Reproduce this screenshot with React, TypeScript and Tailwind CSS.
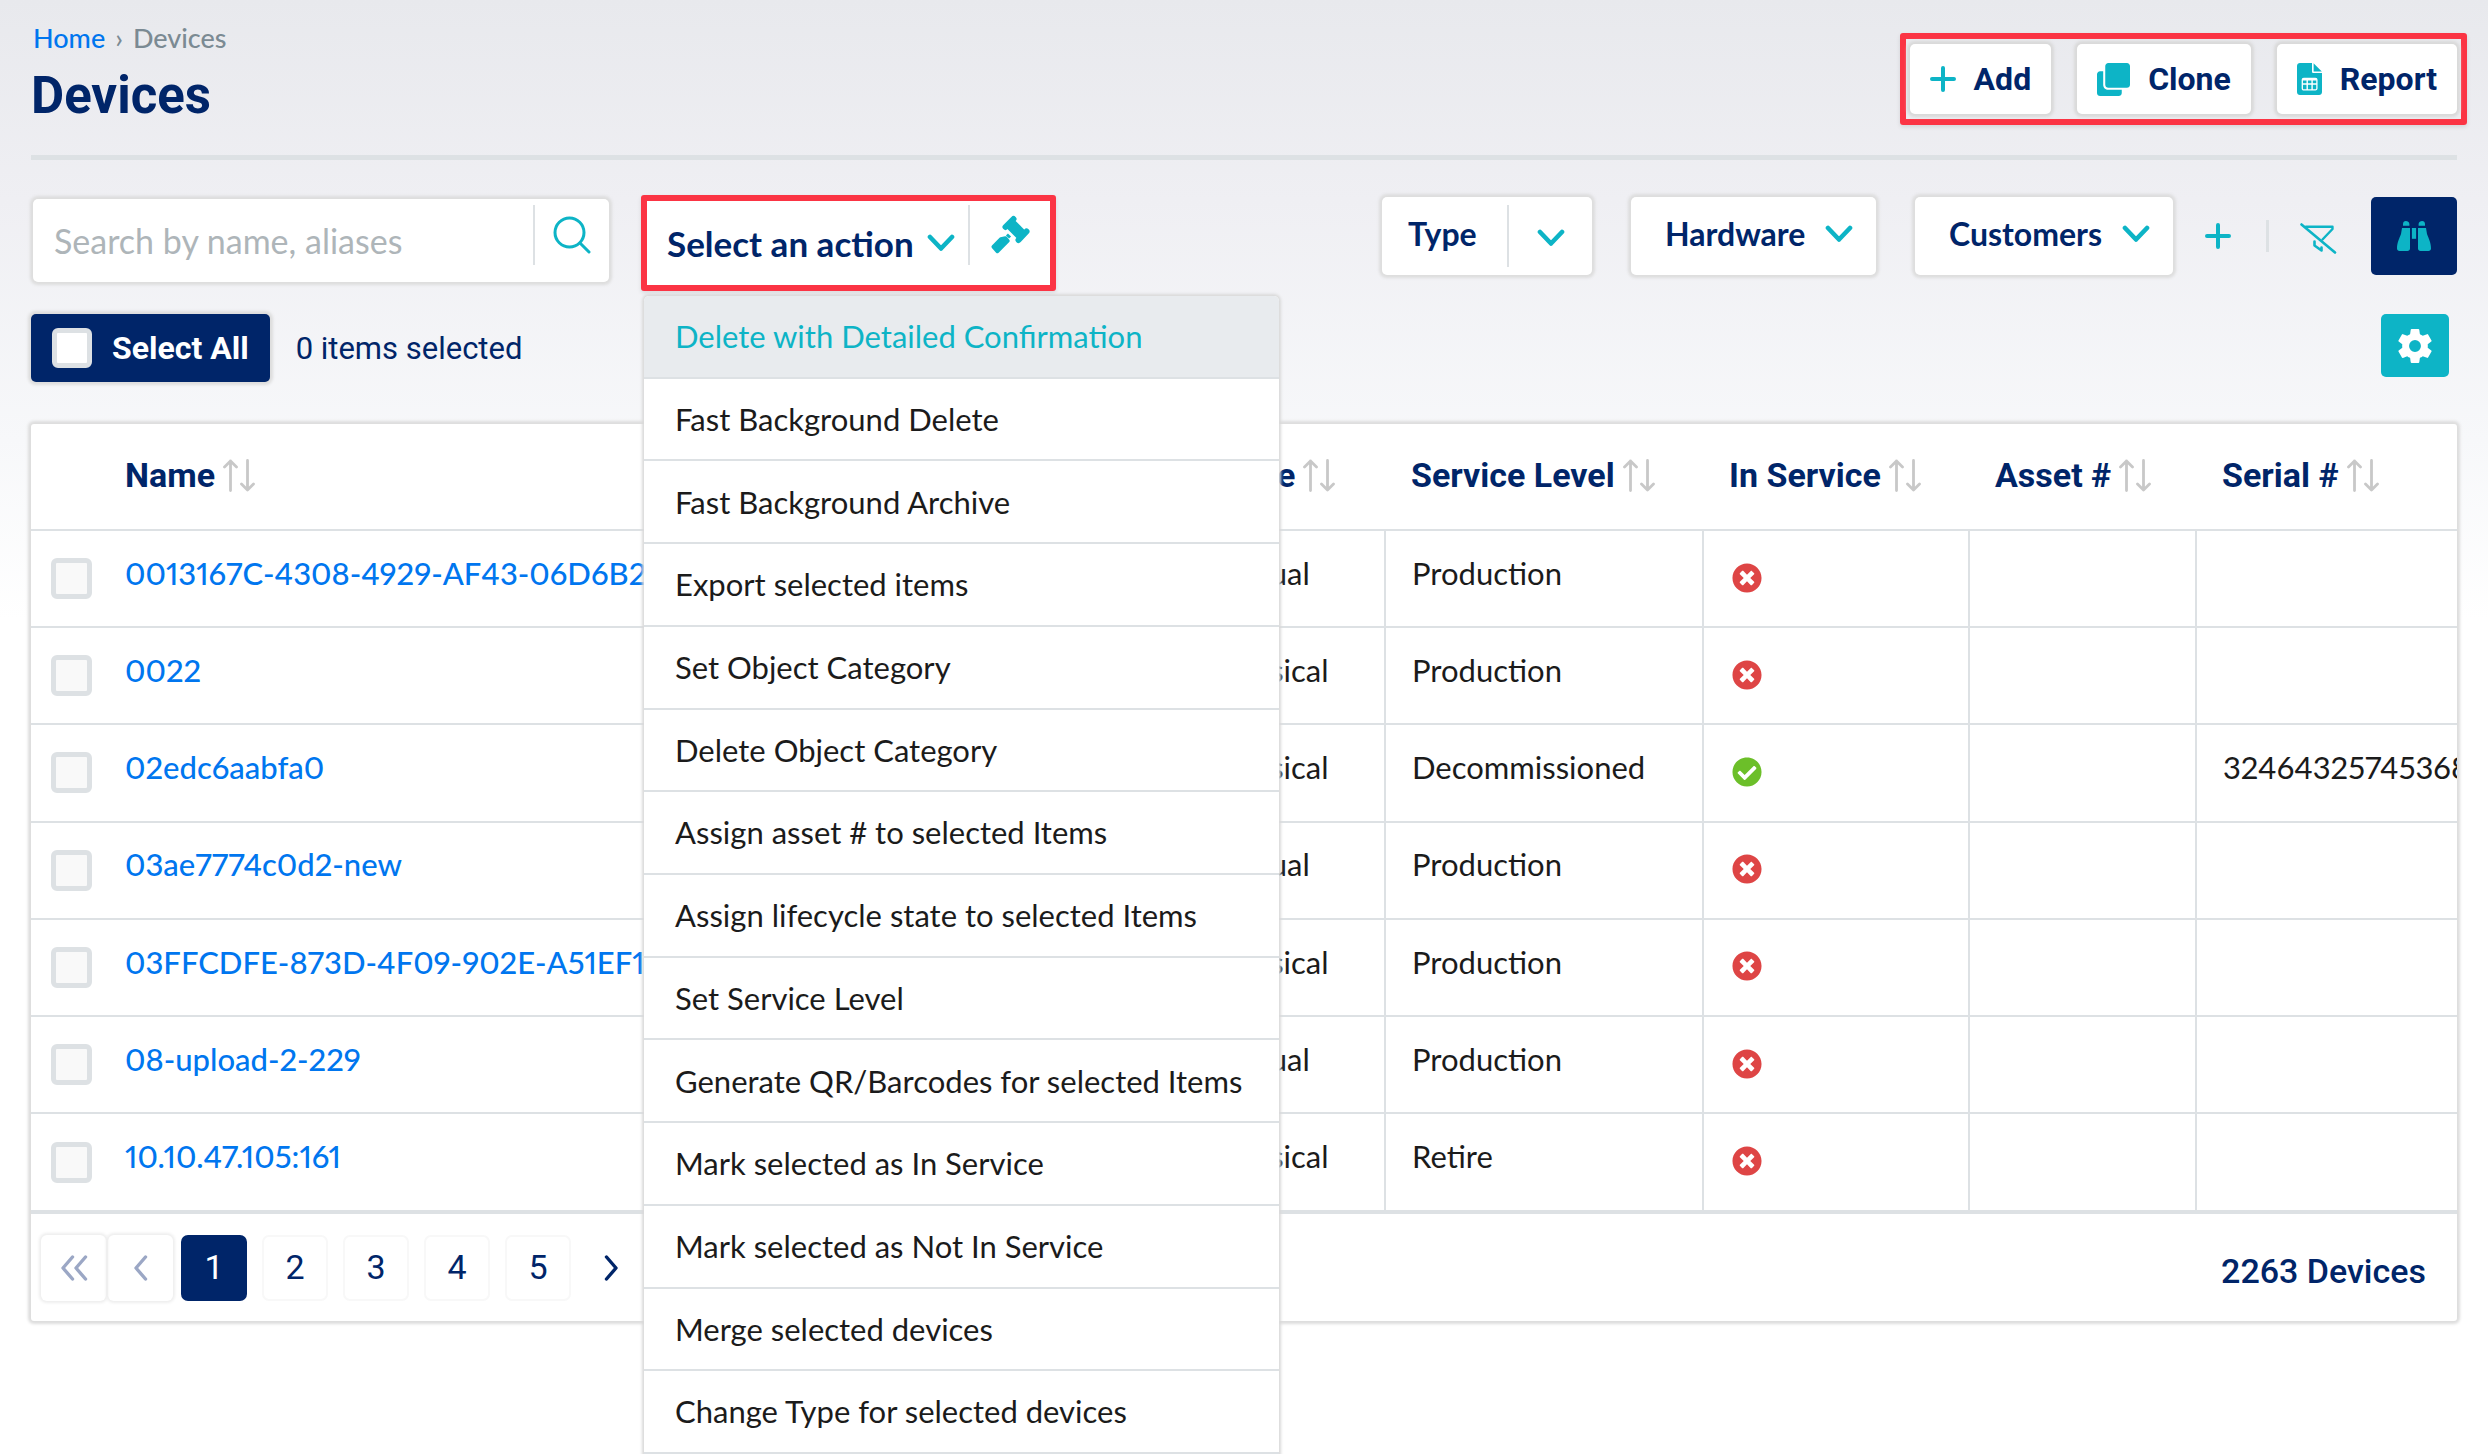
import type { ReactNode } from "react";
import { FaCheckCircle, FaClone, FaTimesCircle } from "react-icons/fa";
import { IoSettingsSharp } from "react-icons/io5";

const ACTIONS = [
  "Delete with Detailed Confirmation",
  "Fast Background Delete",
  "Fast Background Archive",
  "Export selected items",
  "Set Object Category",
  "Delete Object Category",
  "Assign asset # to selected Items",
  "Assign lifecycle state to selected Items",
  "Set Service Level",
  "Generate QR/Barcodes for selected Items",
  "Mark selected as In Service",
  "Mark selected as Not In Service",
  "Merge selected devices",
  "Change Type for selected devices",
];

type Device = {
  name: string;
  type: string;
  level: string;
  inService: boolean;
  serial?: string;
};

const DEVICES: Device[] = [
  { name: "0013167C-4308-4929-AF43-06D6B25", type: "Virtual", level: "Production", inService: false },
  { name: "0022", type: "Physical", level: "Production", inService: false },
  { name: "02edc6aabfa0", type: "Physical", level: "Decommissioned", inService: true, serial: "32464325745368" },
  { name: "03ae7774c0d2-new", type: "Virtual", level: "Production", inService: false },
  { name: "03FFCDFE-873D-4F09-902E-A51EF1C", type: "Physical", level: "Production", inService: false },
  { name: "08-upload-2-229", type: "Virtual", level: "Production", inService: false },
  { name: "10.10.47.105:161", type: "Physical", level: "Retire", inService: false },
];

const COLUMNS = ["Name", "Type", "Service Level", "In Service", "Asset #", "Serial #"];

function Chevron() {
  return (
    <svg className="h-[18px] w-7 shrink-0 text-[#0db4c6]" viewBox="0 0 28 18" fill="none" stroke="currentColor" strokeWidth="4.6" strokeLinecap="round" strokeLinejoin="round" aria-hidden="true">
      <path d="M3 3l11 11.5L25 3" />
    </svg>
  );
}

function PlusIcon() {
  return (
    <svg className="size-[26px] shrink-0 text-[#0db4c6]" viewBox="0 0 26 26" fill="none" stroke="currentColor" strokeWidth="4" strokeLinecap="round" aria-hidden="true">
      <path d="M13 2v22M2 13h22" />
    </svg>
  );
}

function ReportIcon() {
  return (
    <svg className="h-8 w-[25px] shrink-0 text-[#0db4c6]" viewBox="0 0 25 32" fill="currentColor" aria-hidden="true">
      <path d="M3 0h12v8.5c0 1 .6 1.6 1.6 1.6H25V29c0 1.7-1.3 3-3 3H3c-1.7 0-3-1.3-3-3V3c0-1.700 1.300-3 3-3z" />
      <path d="M16.600.3L24.800 8.600h-8.200z" />
      <rect x="5.300" y="15.300" width="14.600" height="11.600" rx="1.500" fill="none" stroke="#fff" strokeWidth="1.300" />
      <path d="M5.300 21h14.600M10.200 15.300v11.600M15.100 15.300v11.600M5.300 16.800h14.600" fill="none" stroke="#fff" strokeWidth="1.400" />
    </svg>
  );
}

function SearchIcon() {
  return (
    <svg className="size-[38px] text-[#0db4c6]" viewBox="0 0 38 38" fill="none" stroke="currentColor" strokeWidth="3" strokeLinecap="round" aria-hidden="true">
      <circle cx="16.500" cy="16.500" r="14.500" />
      <path d="M27 27l9 9" />
    </svg>
  );
}

function GavelIcon() {
  return (
    <svg className="size-10 text-[#0db4c6]" viewBox="0 0 40 40" fill="none" stroke="currentColor" strokeLinejoin="round" strokeLinecap="round" aria-hidden="true">
      <path d="M15.500 12L23.500 4M28.500 25L36.500 16.500" strokeWidth="6" />
      <path d="M20 8.500L32 20.500" strokeWidth="11.500" strokeLinecap="butt" />
      <path d="M19.500 20L17.500 22" strokeWidth="4.500" strokeLinecap="butt" />
      <path d="M10.800 24L3.200 31.800L7.400 36.500L18 25.800L15.500 23Z" fill="currentColor" strokeWidth="3.500" />
    </svg>
  );
}

function FilterOffIcon() {
  return (
    <svg className="h-[31px] w-[37px]" viewBox="0 0 37 31" fill="none" stroke="#0db4c6" strokeLinecap="round" strokeLinejoin="round" aria-hidden="true">
      <path d="M1.500 1.500L35 29.500" strokeWidth="2.600" />
      <path d="M6 3.800h26.500v2.200L22.500 16.500" strokeWidth="2.400" />
      <path d="M14.500 18.500v4L21.500 27.500v-3" strokeWidth="2.600" />
    </svg>
  );
}

function BinocularsIcon() {
  return (
    <svg className="h-[30px] w-[34px]" viewBox="0 0 34 30" fill="#0db4c6" aria-hidden="true">
      <path d="M6 4.800V3c0-1.700 1.200-3 2.800-3S12.400 1.300 12.400 3v1.800z" />
      <path d="M28 4.800V3c0-1.700-1.200-3-2.800-3S21.600 1.300 21.600 3v1.800z" />
      <rect x="14.900" y="7" width="4.200" height="10.800" />
      <path d="M5 7h8v20.500c0 1.400-1.100 2.500-2.500 2.500h-8C1.100 30 0 28.900 0 27.500c0-6 2.600-10.500 4-14.500z" />
      <path d="M29 7h-8v20.500c0 1.400 1.100 2.500 2.500 2.500h8c1.400 0 2.500-1.100 2.500-2.500 0-6-2.600-10.500-4-14.500z" />
    </svg>
  );
}

function SortIcon() {
  return (
    <svg className="h-[33px] w-8 shrink-0" viewBox="0 0 32 33" fill="none" stroke="#c8c8c8" strokeWidth="2.800" strokeLinecap="round" strokeLinejoin="round" aria-hidden="true">
      <path d="M7.500 31.500V2M1.500 8l6-6 6 6M24.500 1.500V31M18.500 25l6 6 6-6" />
    </svg>
  );
}

function PageChevrons({ d, width }: { d: string; width: number }) {
  return (
    <svg height="28" width={width} viewBox={`0 0 ${width} 28`} fill="none" stroke="currentColor" strokeWidth="3.400" strokeLinecap="round" strokeLinejoin="round" aria-hidden="true">
      <path d={d} />
    </svg>
  );
}

function ToolButton({ icon, children }: { icon: ReactNode; children: ReactNode }) {
  return (
    <button type="button" className="flex h-[70px] items-center gap-[18px] rounded-[5px] bg-white px-5 font-['Roboto',sans-serif] text-[32px] font-bold shadow-[0_0_3px_3px_#d9d9d9]">
      {icon}
      {children}
    </button>
  );
}

function Filter({ label }: { label: string }) {
  return (
    <div className="flex h-[78px] items-center gap-[19px] rounded-[5px] bg-white pr-[23px] pb-1 pl-[34px] shadow-[0_0_3px_3px_#dddddd]">
      <select aria-label={label} className="appearance-none bg-transparent text-[32px] font-bold">
        <option>{label}</option>
      </select>
      <Chevron />
    </div>
  );
}

export default function App() {
  return (
    <main className="min-h-screen bg-white bg-[linear-gradient(to_bottom,#e8e9ed_0px,#efeff3_200px,#f7f8fa_440px,#ffffff_620px)] px-[31px] pt-[22px] font-['Lato',sans-serif] text-[#002569]">
      <header className="flex items-start justify-between border-b-[5px] border-[#dde1e4] pb-[30px]">
        <div>
          <nav aria-label="Breadcrumb" className="flex h-8 items-center gap-[10px] pl-[2px] text-[27px] font-medium text-[#7b8a93]">
            <a href="#home" className="text-[#0076ef]">Home</a>
            <span>›</span>
            <span>Devices</span>
          </nav>
          <h1 className="mt-[14px] font-['Roboto',sans-serif] text-[51px] leading-[56px] font-bold">Devices</h1>
        </div>
        <div className="mt-[11px] -mr-[10px] flex h-[92px] items-center gap-[26px] rounded-[3px] border-[6px] border-[#fb3444] px-1 shadow-[0_2px_4px_#0000001a]">
          <ToolButton icon={<PlusIcon />}>Add</ToolButton>
          <ToolButton icon={<FaClone className="size-[33px] text-[#0db4c6]" />}>Clone</ToolButton>
          <ToolButton icon={<ReportIcon />}>Report</ToolButton>
        </div>
      </header>

      <section className="flex items-start pt-[35px]" aria-label="Search, actions and filters">
        <form className="mt-1 ml-[2px] flex h-[83px] w-[576px] items-start rounded-[5px] bg-white shadow-[0_0_3px_3px_#dddddd]">
          <input type="search" aria-label="Search by name, aliases" placeholder="Search by name, aliases" className="h-full min-w-0 flex-1 pl-[21px] text-[34px] outline-none placeholder:text-[#aeb5b9]" />
          <button type="submit" aria-label="Search" className="mt-[6px] flex h-[60px] w-[76px] items-center justify-center border-l-2 border-[#dde1e4]">
            <SearchIcon />
          </button>
        </form>

        <div className="relative z-10 ml-8 flex h-24 w-[415px] items-center rounded-[3px] border-[6px] border-[#fb3444] bg-white shadow-[0_2px_4px_#0000001a]">
          <button type="button" aria-haspopup="menu" aria-expanded="true" className="flex flex-1 items-center justify-between pr-[13px] pl-5 text-[35px] font-bold whitespace-nowrap">
            Select an action
            <Chevron />
          </button>
          <button type="button" aria-label="Run action" className="mb-4 flex h-[60px] w-[82px] items-center justify-center border-l-2 border-[#dde1e4]">
            <GavelIcon />
          </button>
          <ul role="menu" className="absolute top-[95px] -left-[3px] grid h-[1158px] w-[635px] auto-rows-fr rounded-t-[5px] bg-white text-[31px] text-[#1b1b1b] shadow-[0_0_3px_2px_#d9d9d9]">
            {ACTIONS.map((action, i) => (
              <li key={action} role="none" className="border-b-2 border-[#dde1e4] first:rounded-t-[5px] first:bg-[#e8ebee] first:text-[#0db4c6]">
                <button type="button" role="menuitem" className="h-full w-full px-[31px] text-left" tabIndex={i === 0 ? 0 : -1}>
                  {action}
                </button>
              </li>
            ))}
          </ul>
        </div>

        <div className="mt-[2px] ml-auto flex items-center">
          <div className="flex gap-[39px]">
            <div className="flex h-[78px] items-center rounded-[5px] bg-white pr-[27px] pl-[26px] shadow-[0_0_3px_3px_#dddddd]">
              <select aria-label="Type" className="mr-[30px] appearance-none bg-transparent pb-1 text-[32px] font-bold">
                <option>Type</option>
              </select>
              <span className="flex h-[62px] items-center border-l-2 border-[#dde1e4] pt-1 pl-7">
                <Chevron />
              </span>
            </div>
            <Filter label="Hardware" />
            <Filter label="Customers" />
          </div>
          <button type="button" aria-label="Add filter" className="ml-[32px]">
            <PlusIcon />
          </button>
          <span className="ml-[35px] h-8 w-[3px] bg-[#dde1e4]" />
          <button type="button" aria-label="Clear filters" className="mt-1 ml-[31px]">
            <FilterOffIcon />
          </button>
          <button type="button" aria-label="Advanced search" className="ml-[34px] flex h-[78px] w-[86px] items-center justify-center rounded-[5px] bg-[#002569]">
            <BinocularsIcon />
          </button>
        </div>
      </section>

      <section className="mt-[23px] flex items-center" aria-label="Selection">
        <label className="flex h-[68px] items-center gap-5 rounded-[5px] bg-[#002569] px-[21px] font-['Roboto',sans-serif] text-[32px] font-bold text-white shadow-[0_0_3px_3px_#dddddd]">
          <input type="checkbox" className="size-10 appearance-none rounded-[6px] border-[5px] border-[#dde1e4] bg-white" />
          Select All
        </label>
        <p className="ml-[26px] pt-[2px] font-['Roboto',sans-serif] text-[31px]">0 items selected</p>
        <button type="button" aria-label="Settings" className="mr-2 ml-auto flex h-[63px] w-[68px] items-center justify-center self-start rounded-[5px] bg-[#0db4c6] text-white">
          <IoSettingsSharp className="size-[38px]" />
        </button>
      </section>

      <section className="mt-[42px] overflow-hidden rounded-[3px] bg-white shadow-[0_0_3px_3px_#dddddd]" aria-label="Devices">
        <table className="h-[790px] w-full table-fixed border-collapse text-left">
          <colgroup>
            <col className="w-[94px]" />
            <col />
            <col className="w-[190px]" />
            <col className="w-[318px]" />
            <col className="w-[266px]" />
            <col className="w-[227px]" />
            <col className="w-[261px]" />
          </colgroup>
          <thead>
            <tr className="h-[106px] border-b-2 border-[#dde1e4] font-['Roboto',sans-serif] text-[34px]">
              <td />
              {COLUMNS.map((label) => (
                <th key={label} scope="col" className="pb-[3px] pl-[26px] font-bold whitespace-nowrap first-of-type:pl-0">
                  <button type="button" className="flex items-center gap-2">
                    {label}
                    <SortIcon />
                  </button>
                </th>
              ))}
            </tr>
          </thead>
          <tbody className="text-[31px] whitespace-nowrap text-[#1b1b1b] proportional-nums">
            {DEVICES.map((device) => (
              <tr key={device.name} className="border-b-2 border-[#dde1e4] last:border-b-4">
                <td className="pl-5">
                  <input type="checkbox" aria-label={device.name} className="block size-[41px] appearance-none rounded-[6px] border-[5px] border-[#dde1e4] bg-[#f9f9f9]" />
                </td>
                <td className="overflow-hidden pb-[11px]">
                  <a href="#device" className="font-medium text-[#0076ef]">{device.name}</a>
                </td>
                <td className="pb-[11px] pl-6">{device.type}</td>
                <td className="border-l-2 border-[#dde1e4] pb-[11px] pl-[26px]">{device.level}</td>
                <td className="border-l-2 border-[#dde1e4] pb-[2px] pl-7">
                  {device.inService ? (
                    <FaCheckCircle className="size-[30px] text-[#6cbf29]" aria-label="Yes" />
                  ) : (
                    <FaTimesCircle className="size-[30px] text-[#de4545]" aria-label="No" />
                  )}
                </td>
                <td className="border-l-2 border-[#dde1e4]" />
                <td className="overflow-hidden border-l-2 border-[#dde1e4] pb-[11px] pl-[26px]">{device.serial}</td>
              </tr>
            ))}
          </tbody>
        </table>

        <footer className="flex h-[107px] items-center justify-between pr-[31px] pl-[10px] font-['Roboto',sans-serif]">
          <nav aria-label="Pagination" className="flex items-center text-[34px]">
            <button type="button" disabled aria-label="First page" className="flex h-[66px] w-[65px] items-center justify-center rounded-[6px] text-[#9ba7c5] shadow-[0_0_3px_2px_#eeeeee]">
              <PageChevrons width={28} d="M12.500 3L3 14l9.500 11M25.500 3L16 14l9.500 11" />
            </button>
            <button type="button" disabled aria-label="Previous page" className="mr-2 ml-[2px] flex h-[66px] w-[65px] items-center justify-center rounded-[6px] text-[#9ba7c5] shadow-[0_0_3px_2px_#eeeeee]">
              <PageChevrons width={16} d="M12.500 3L3 14l9.500 11" />
            </button>
            <div className="flex gap-[15px]">
              {[1, 2, 3, 4, 5].map((page) => (
                <button key={page} type="button" aria-current={page === 1 ? "page" : undefined} className="size-[66px] rounded-[7px] border-2 border-[#f8f8f8] aria-[current=page]:border-[#002569] aria-[current=page]:bg-[#002569] aria-[current=page]:text-white">
                  {page}
                </button>
              ))}
            </div>
            <button type="button" aria-label="Next page" className="ml-8">
              <PageChevrons width={16} d="M3.500 3L13 14 3.500 25" />
            </button>
          </nav>
          <p className="pt-2 text-[34px] font-medium">2263 Devices</p>
        </footer>
      </section>
    </main>
  );
}
